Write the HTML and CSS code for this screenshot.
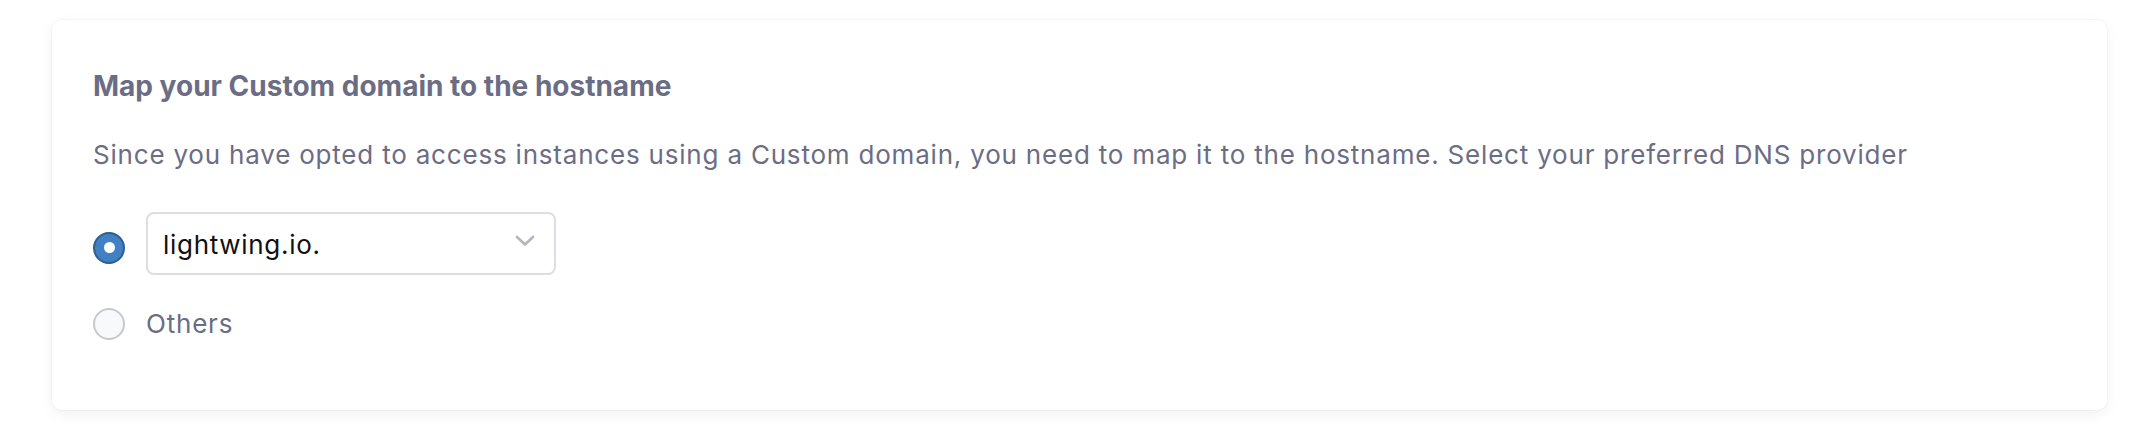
FILE: index.html
```html
<!DOCTYPE html>
<html>
<head>
<meta charset="utf-8">
<link rel="stylesheet" href="styles.css">
</head>
<body>
<div class="page">
  <section class="card">
    <h2 class="title">Map your Custom domain to the hostname</h2>
    <p class="desc">Since you have opted to access instances using a Custom domain, you need to map it to the hostname. Select your preferred DNS provider</p>
    <div class="options">
      <div class="option option-select">
        <span class="radio radio-checked"><span class="dot"></span></span>
        <div class="select">
          <span class="select-value">lightwing.io.</span>
          <svg class="chevron" width="20" height="12" viewBox="0 0 20 12"><path d="M2 2 L10 9.5 L18 2" fill="none" stroke="#b4b5c3" stroke-width="2.6" stroke-linecap="round" stroke-linejoin="round"/></svg>
        </div>
      </div>
      <div class="option">
        <span class="radio"></span>
        <span class="option-label">Others</span>
      </div>
    </div>
  </section>
</div>
</body>
</html>
```

FILE: styles.css
```css
* { box-sizing: border-box; }
html, body { margin: 0; padding: 0; background: #ffffff; }
body { font-family: Inter, "Noto Sans", sans-serif; }

.page {
  padding: 20px 31px 24px 52px;
}

.card {
  background: #ffffff;
  border-radius: 10px;
  box-shadow: 0 0 0 1px rgba(0,0,0,0.025), 0 4px 14px rgba(0,0,0,0.06);
  padding: 50px 40px 70px 41px;
  height: 390px;
}

.title {
  margin: 0;
  font-size: 28px;
  line-height: 32px;
  font-weight: 700;
  color: #6b6d85;
}

.desc {
  margin: 37px 0 0;
  font-size: 26px;
  letter-spacing: 0.8px;
  line-height: 32px;
  color: #6b6d85;
}

.options {
  margin-top: 41px;
  display: flex;
  flex-direction: column;
  gap: 33px;
}

.option {
  display: flex;
  align-items: center;
  gap: 21px;
  height: 32px;
}

.option-select { height: 63px; }
.option-select .radio { margin-top: 8px; }

.radio {
  flex: none;
  width: 32px;
  height: 32px;
  border-radius: 50%;
  border: 2px solid #c8c9ce;
  background: #f8f9fb;
  display: flex;
  align-items: center;
  justify-content: center;
}

.radio-checked {
  background: #4180c3;
  border: 2px solid #2d5e92;
}

.dot {
  width: 11px;
  height: 11px;
  border-radius: 50%;
  background: #ffffff;
}

.select {
  width: 410px;
  height: 63px;
  border: 2px solid #dcdde6;
  border-radius: 8px;
  display: flex;
  align-items: center;
  justify-content: space-between;
  padding: 2px 19px 0 15px;
}

.select-value {
  font-size: 26px;
  letter-spacing: 0.7px;
  color: #111111;
}

.chevron { display: block; margin-top: -8px; }

.option-label {
  font-size: 26px;
  letter-spacing: 0.8px;
  line-height: 32px;
  color: #6b6d85;
}
```
